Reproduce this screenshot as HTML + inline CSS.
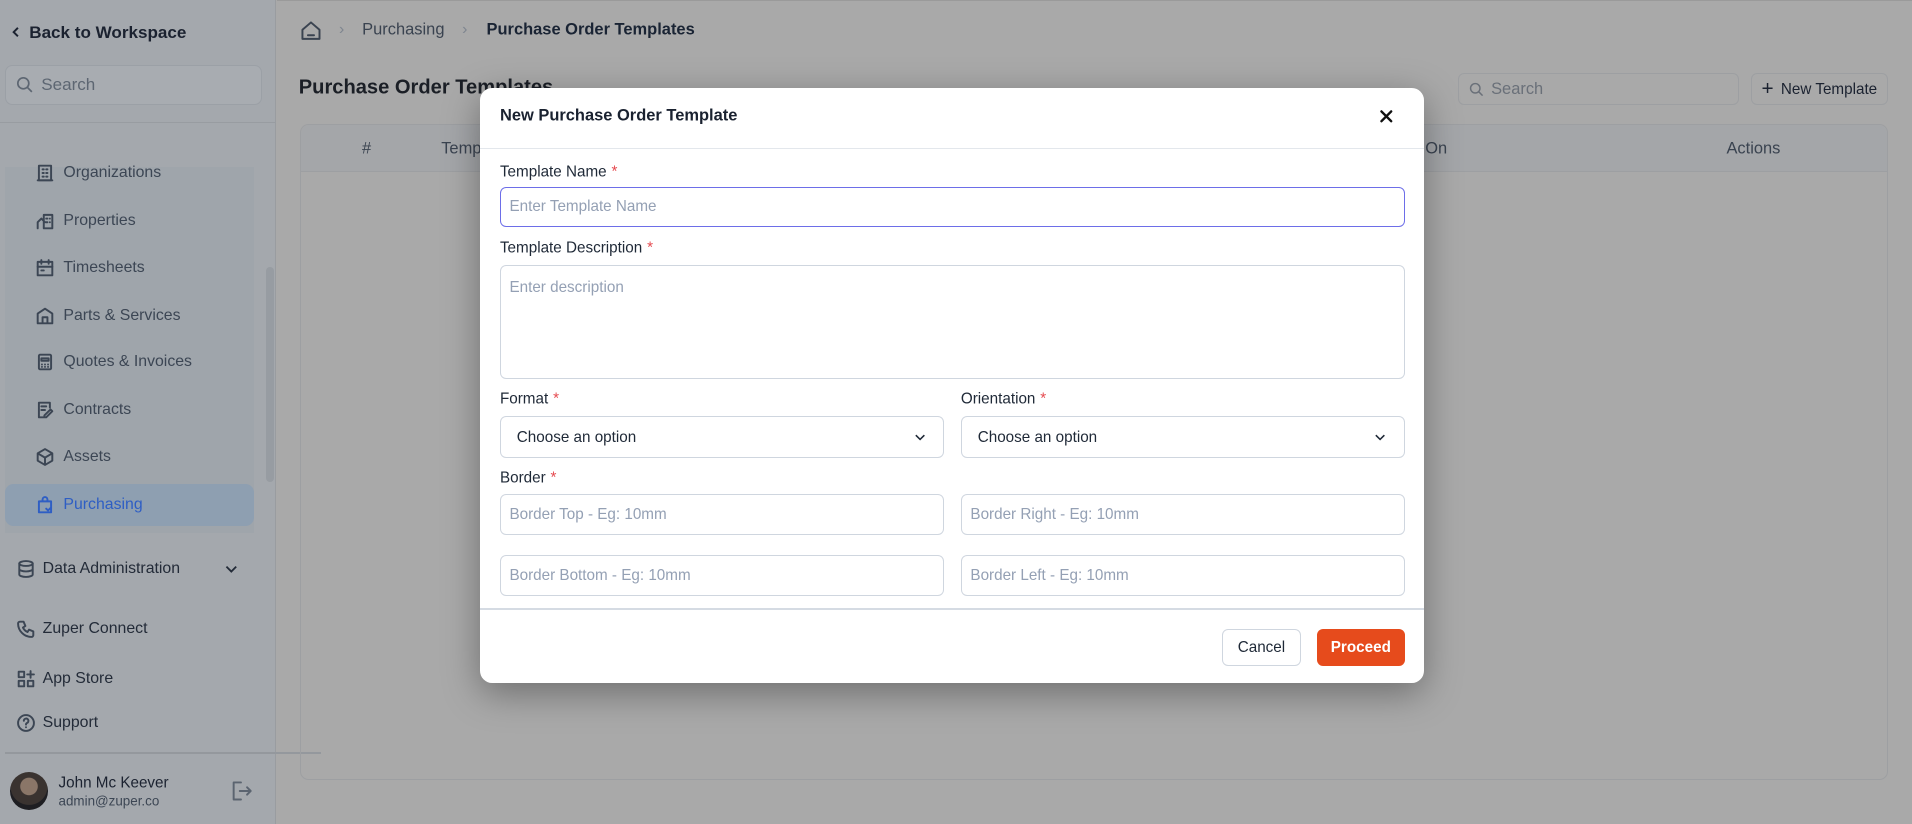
<!DOCTYPE html>
<html><head><meta charset="utf-8"><style>
*{box-sizing:border-box;margin:0;padding:0}
html,body{width:1912px;height:824px;overflow:hidden}
body{font-family:"Liberation Sans",sans-serif;background:#a9a9a9}
#root{position:absolute;left:0;top:0;width:1568px;height:676px;zoom:1.2194;background:#a9a9a9;color:#1b2230}
.abs{position:absolute}
.side{position:absolute;left:0;top:0;width:226px;height:676px;background:#a4a8ad;border-right:1px solid #999ca0}
.nav{position:absolute;left:4px;top:137px;width:204px;height:300px;background:#9fa5ab}
.item{position:absolute;left:52px;font-size:13px;color:#3c4654;transform:translateY(-50%)}
.ico{position:absolute;width:16px;height:16px;transform:translate(-50%,-50%)}
.ico svg{width:16px;height:16px;fill:none;stroke:#3c4654;stroke-width:1.6;stroke-linecap:round;stroke-linejoin:round}
.lower{position:absolute;left:35px;font-size:13px;color:#232b38;transform:translateY(-50%)}
.modal{position:absolute;left:394px;top:72px;width:774px;height:488px;background:#fff;border-radius:10px;box-shadow:0 8px 30px rgba(0,0,0,.35)}
.lbl{position:absolute;left:16px;font-size:12.5px;color:#1f2937;transform:translateY(-50%)}
.lbl b{color:#e5484d;font-weight:normal;margin-left:4px}
.inp{position:absolute;border:1px solid #cfd6df;border-radius:5px;font-size:12.5px;color:#94a0b4;padding-left:7px;display:flex;align-items:center}
.sel{color:#1f2937;padding-left:13px}
.sel svg{position:absolute;right:14px;top:50%;transform:translateY(-50%)}
</style></head><body><div id="root">

<div class="side">
  <div class="abs" style="left:8px;top:27px;transform:translateY(-50%);font-size:14px;font-weight:bold;color:#1b2230">
    <svg width="10" height="10" viewBox="0 0 10 10" style="margin-right:6px"><path d="M6.5 1.5 3 5l3.5 3.5" stroke="#1b2230" stroke-width="1.6" fill="none"/></svg>Back to Workspace</div>
  <div class="abs" style="left:4px;top:53px;width:211px;height:33px;border:1px solid #9ba0a6;border-radius:6px;background:#a8acb1;font-size:14px;color:#5d6672;display:flex;align-items:center;padding-left:8px">
    <svg width="14" height="14" viewBox="0 0 14 14" style="margin-right:7px"><circle cx="6" cy="6" r="4.5" stroke="#5d6672" stroke-width="1.4" fill="none"/><path d="M9.5 9.5 13 13" stroke="#5d6672" stroke-width="1.4"/></svg>Search</div>
  <div class="abs" style="left:0;top:100px;width:226px;height:1px;background:#989ca1"></div>
  <div class="nav"></div>
  <div class="abs" style="left:218px;top:219px;width:7px;height:176px;border-radius:4px;background:#979ca2"></div>
  <div class="abs" style="left:4px;top:397px;width:204px;height:34px;border-radius:7px;background:#8e9fb1"></div>

  <div class="ico" style="left:37px;top:142px"><svg viewBox="0 0 16 16"><rect x="3" y="2" width="10" height="12"/><path d="M2 14h12M6 5h1M9 5h1M6 8h1M9 8h1M6 11h1M9 11h1"/></svg></div>
  <div class="item" style="top:142px">Organizations</div>
  <div class="ico" style="left:37px;top:181px"><svg viewBox="0 0 16 16"><path d="M7 14V3h7v11zM2 14V9l3-3 3 3M9 6h1M12 6h0M9 9h1M12 9h0"/></svg></div>
  <div class="item" style="top:181px">Properties</div>
  <div class="ico" style="left:37px;top:220px"><svg viewBox="0 0 16 16"><rect x="2" y="3" width="12" height="11"/><path d="M2 7h12M5 1.5v3M11 1.5v3M5 10h2"/></svg></div>
  <div class="item" style="top:220px">Timesheets</div>
  <div class="ico" style="left:37px;top:259px"><svg viewBox="0 0 16 16"><path d="M2 14V6l6-4 6 4v8zM6 14V9h4v5"/></svg></div>
  <div class="item" style="top:259px">Parts &amp; Services</div>
  <div class="ico" style="left:37px;top:297px"><svg viewBox="0 0 16 16"><rect x="3" y="2" width="10" height="12" rx="1"/><path d="M5 5h6v2H5zM5.5 10h0M8 10h0M10.5 10h0M5.5 12h0M8 12h0M10.5 12h0"/></svg></div>
  <div class="item" style="top:297px">Quotes &amp; Invoices</div>
  <div class="ico" style="left:37px;top:336px"><svg viewBox="0 0 16 16"><path d="M12 6V2H3v12h4M5 5h4M5 8h3M9 14l5-5-1.5-1.5-5 5V14z"/></svg></div>
  <div class="item" style="top:336px">Contracts</div>
  <div class="ico" style="left:37px;top:375px"><svg viewBox="0 0 16 16"><path d="M8 1.5 14 5v6l-6 3.5L2 11V5zM2 5l6 3.5L14 5M8 8.5v6"/></svg></div>
  <div class="item" style="top:375px">Assets</div>
  <div class="ico" style="left:37px;top:414px"><svg viewBox="0 0 16 16" style="stroke:#2e5ec4"><path d="M3 5h10v9H3zM6 5V3.5a2 2 0 0 1 4 0V5M9 11l1.5 1.5L13 10"/></svg></div>
  <div class="item" style="top:414px;color:#2e5ec4">Purchasing</div>

  <div class="ico" style="left:21px;top:467px"><svg viewBox="0 0 16 16"><ellipse cx="8" cy="3.5" rx="5.5" ry="2"/><path d="M2.5 3.5v9c0 1.1 2.5 2 5.5 2s5.5-.9 5.5-2v-9M2.5 8c0 1.1 2.5 2 5.5 2s5.5-.9 5.5-2"/></svg></div>
  <div class="lower" style="top:467px">Data Administration</div>
  <svg class="abs" style="left:184px;top:462px" width="12" height="10" viewBox="0 0 12 10"><path d="M2 3l4 4 4-4" stroke="#232b38" stroke-width="1.5" fill="none"/></svg>
  <div class="ico" style="left:21px;top:516px"><svg viewBox="0 0 16 16"><path d="M3 2h3l1.5 3.5-2 1.3a8 8 0 0 0 3.7 3.7l1.3-2L14 10v3a1.5 1.5 0 0 1-1.5 1.5A11 11 0 0 1 1.5 3.5 1.5 1.5 0 0 1 3 2z"/></svg></div>
  <div class="lower" style="top:516px">Zuper Connect</div>
  <div class="ico" style="left:21px;top:557px"><svg viewBox="0 0 16 16"><rect x="2" y="2" width="4.5" height="4.5"/><rect x="2" y="9.5" width="4.5" height="4.5"/><rect x="9.5" y="9.5" width="4.5" height="4.5"/><path d="M11.75 1.5v5.5M9 4.25h5.5"/></svg></div>
  <div class="lower" style="top:557px">App Store</div>
  <div class="ico" style="left:21px;top:593px"><svg viewBox="0 0 16 16"><circle cx="8" cy="8" r="6.5"/><path d="M6.2 6.2a1.9 1.9 0 1 1 2.6 1.8c-.6.3-.8.7-.8 1.3M8 11.5h0"/></svg></div>
  <div class="lower" style="top:593px">Support</div>
  <div class="abs" style="left:4px;top:617px;width:259px;height:1px;background:#94989d"></div>
  <div class="abs" style="left:8px;top:633px;width:31px;height:31px;border-radius:50%;background:radial-gradient(circle at 50% 38%,#8a7668 0 28%,#3a3330 30% 60%,#1e1e22 62%)"></div>
  <div class="abs" style="left:48px;top:642px;transform:translateY(-50%);font-size:12.5px;color:#1b2230">John Mc Keever</div>
  <div class="abs" style="left:48px;top:657px;transform:translateY(-50%);font-size:11px;color:#3c4654">admin@zuper.co</div>
  <svg class="abs" style="left:189px;top:640px" width="19" height="18" viewBox="0 0 19 18"><path d="M9 2H3v14h6M8 9h9M14 6l3 3-3 3" stroke="#5b6470" stroke-width="1.6" fill="none" stroke-linecap="round" stroke-linejoin="round"/></svg>
</div>

<div class="abs" style="left:227px;top:0;width:1341px;height:1px;background:#9a9a9a"></div>
<svg class="abs" style="left:246px;top:16px" width="18" height="18" viewBox="0 0 18 18"><path d="M2 8 9 2l7 6v7.5H2zM6.5 12.5h5" stroke="#3a4350" stroke-width="1.6" fill="none" stroke-linejoin="round" stroke-linecap="round"/></svg>
<div class="abs" style="left:278px;top:25px;transform:translateY(-50%);font-size:13px;color:#7e858f">›</div>
<div class="abs" style="left:297px;top:25px;transform:translateY(-50%);font-size:13.5px;color:#3a4350">Purchasing</div>
<div class="abs" style="left:379px;top:25px;transform:translateY(-50%);font-size:13px;color:#7e858f">›</div>
<div class="abs" style="left:399px;top:25px;transform:translateY(-50%);font-size:13.5px;font-weight:bold;color:#1a2434">Purchase Order Templates</div>
<div class="abs" style="left:245px;top:72px;transform:translateY(-50%);font-size:16.5px;font-weight:bold;color:#1b1f26">Purchase Order Templates</div>
<div class="abs" style="left:1196px;top:60px;width:230px;height:26px;border:1px solid #9d9fa2;border-radius:5px;display:flex;align-items:center;padding-left:8px;font-size:13.5px;color:#6a7079">
  <svg width="12" height="12" viewBox="0 0 14 14" style="margin-right:6px"><circle cx="6" cy="6" r="4.5" stroke="#6a7079" stroke-width="1.4" fill="none"/><path d="M9.5 9.5 13 13" stroke="#6a7079" stroke-width="1.4"/></svg>Search</div>
<div class="abs" style="left:1436px;top:60px;width:112px;height:26px;border:1px solid #9d9fa2;border-radius:5px;display:flex;align-items:center;justify-content:center;font-size:12.5px;color:#1b2230"><span style="font-size:17px;margin-right:6px;line-height:1">+</span>New Template</div>
<div class="abs" style="left:246px;top:102px;width:1302px;height:538px;border:1px solid #9d9fa2;border-radius:7px">
  <div class="abs" style="left:0;top:0;width:100%;height:38px;border-bottom:1px solid #9d9fa2;background:#a4a6a9;border-radius:7px 7px 0 0"></div>
  <div class="abs" style="left:50px;top:19px;transform:translateY(-50%);font-size:13.5px;color:#3a4350">#</div>
  <div class="abs" style="left:115px;top:19px;transform:translateY(-50%);font-size:13.5px;color:#3a4350">Temp</div>
  <div class="abs" style="left:922px;top:19px;transform:translateY(-50%);font-size:13.5px;color:#3a4350">On</div>
  <div class="abs" style="left:1169px;top:19px;transform:translateY(-50%);font-size:13.5px;color:#3a4350">Actions</div>
</div>

<div class="modal">
  <div class="abs" style="left:16px;top:23px;transform:translateY(-50%);font-size:13.5px;font-weight:bold;color:#1a2230">New Purchase Order Template</div>
  <svg class="abs" style="left:737px;top:17px" width="12" height="12" viewBox="0 0 12 12"><path d="M2 2l8 8M10 2l-8 8" stroke="#111" stroke-width="2" stroke-linecap="round"/></svg>
  <div class="abs" style="left:0;top:49px;width:774px;height:1px;background:#e3e7ec"></div>
  <div class="lbl" style="top:69px">Template Name<b>*</b></div>
  <div class="inp" style="left:16px;top:81px;width:742px;height:33px;border-color:#6d6ee8">Enter Template Name</div>
  <div class="lbl" style="top:131px">Template Description<b>*</b></div>
  <div class="inp" style="left:16px;top:145px;width:742px;height:94px;align-items:flex-start;padding-top:11px">Enter description</div>
  <div class="lbl" style="top:255px">Format<b>*</b></div>
  <div class="lbl" style="top:255px;left:394px">Orientation<b>*</b></div>
  <div class="inp sel" style="left:16px;top:269px;width:364px;height:35px">Choose an option<svg width="10" height="8" viewBox="0 0 10 8"><path d="M1.5 2.5 5 6l3.5-3.5" stroke="#1f2937" stroke-width="1.3" fill="none"/></svg></div>
  <div class="inp sel" style="left:394px;top:269px;width:364px;height:35px">Choose an option<svg width="10" height="8" viewBox="0 0 10 8"><path d="M1.5 2.5 5 6l3.5-3.5" stroke="#1f2937" stroke-width="1.3" fill="none"/></svg></div>
  <div class="lbl" style="top:320px">Border<b>*</b></div>
  <div class="inp" style="left:16px;top:333px;width:364px;height:34px">Border Top - Eg: 10mm</div>
  <div class="inp" style="left:394px;top:333px;width:364px;height:34px">Border Right - Eg: 10mm</div>
  <div class="inp" style="left:16px;top:383px;width:364px;height:34px">Border Bottom - Eg: 10mm</div>
  <div class="inp" style="left:394px;top:383px;width:364px;height:34px">Border Left - Eg: 10mm</div>
  <div class="abs" style="left:0;top:427px;width:774px;height:1px;background:#d5dbe3"></div>
  <div class="abs" style="left:608px;top:444px;width:65px;height:30px;border:1px solid #cfd6df;border-radius:5px;display:flex;align-items:center;justify-content:center;font-size:12.5px;color:#1f2937">Cancel</div>
  <div class="abs" style="left:686px;top:444px;width:72px;height:30px;background:#e64b1c;border-radius:5px;display:flex;align-items:center;justify-content:center;font-size:12.5px;font-weight:bold;color:#fff">Proceed</div>
</div>
</div></body></html>
